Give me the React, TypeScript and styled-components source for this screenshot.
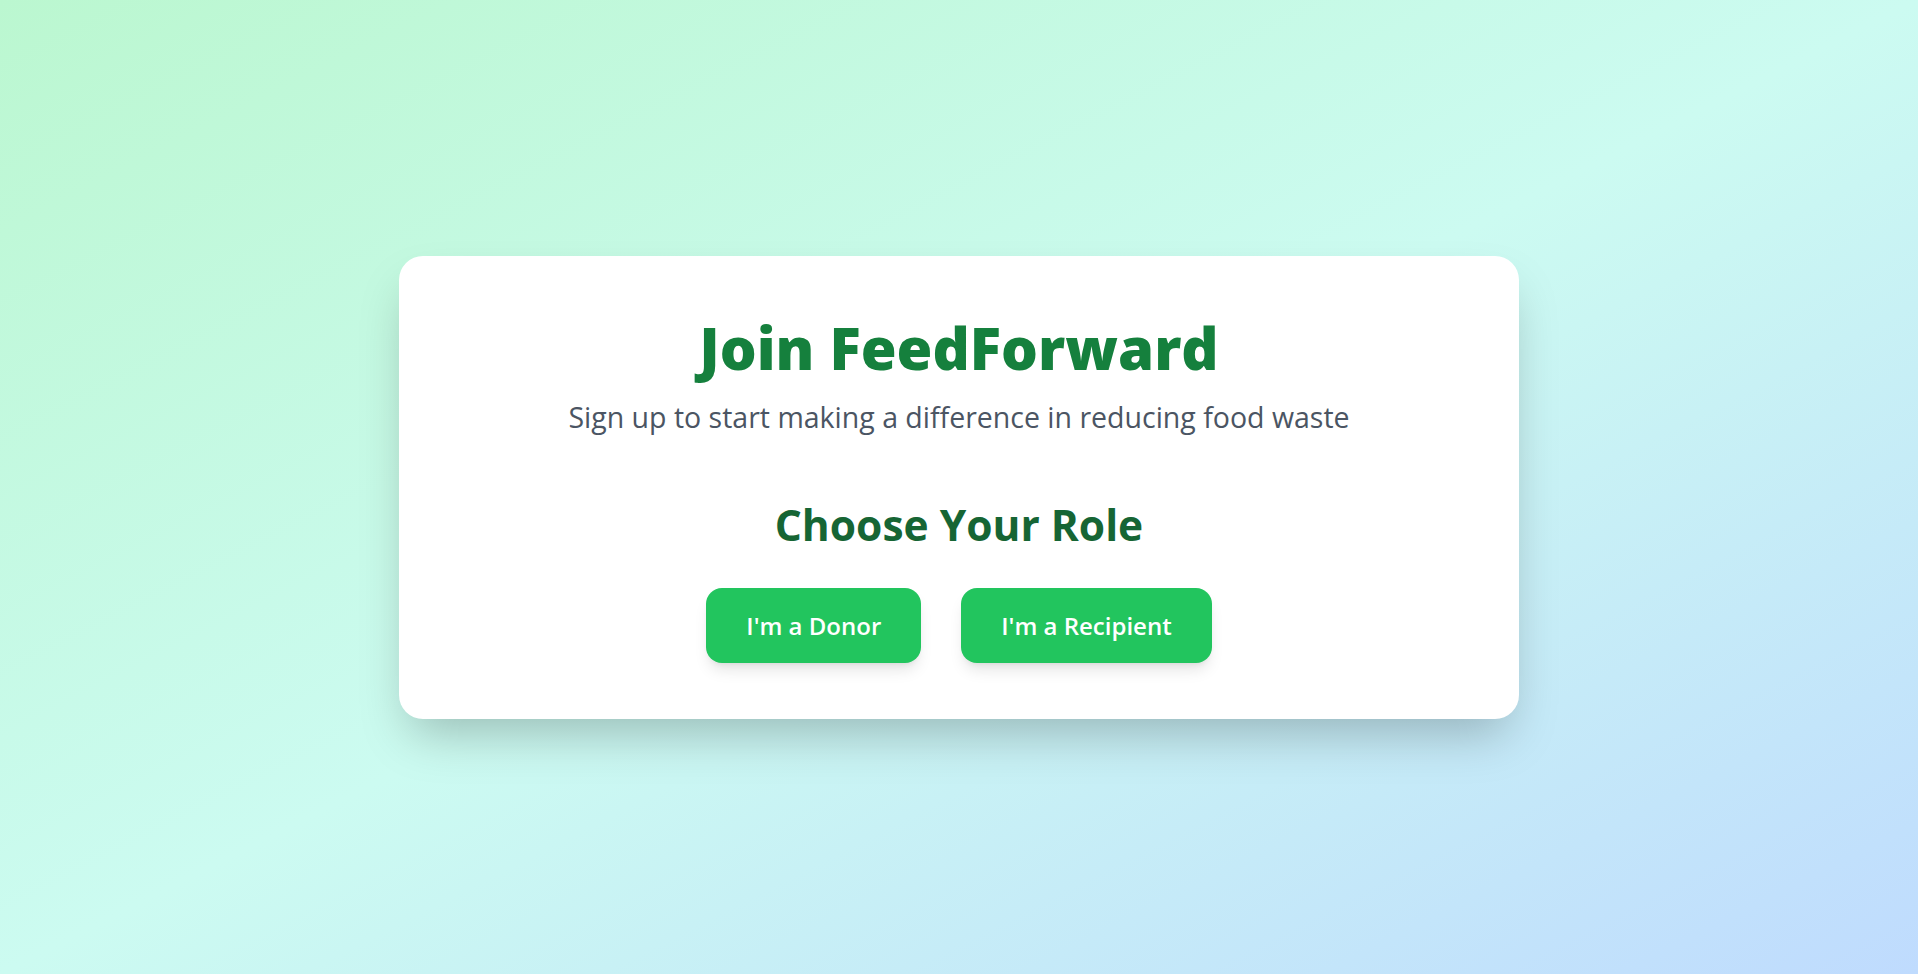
import React from "react";
import styled, { createGlobalStyle } from "styled-components";

const GlobalStyle = createGlobalStyle`
  html, body {
    margin: 0;
    padding: 0;
  }
  body {
    font-family: "Open Sans", "Noto Sans", sans-serif;
  }
  * {
    box-sizing: border-box;
  }
`;

function App() {
  return (
    <Page>
      <GlobalStyle />
      <Card>
        <Title>Join FeedForward</Title>
        <Subtitle>Sign up to start making a difference in reducing food waste</Subtitle>
        <RoleHeading>Choose Your Role</RoleHeading>
        <ButtonRow>
          <RoleButton type="button">I'm a Donor</RoleButton>
          <RoleButton type="button">I'm a Recipient</RoleButton>
        </ButtonRow>
      </Card>
    </Page>
  );
}

export default App;

const Page = styled.div`
  min-height: 100vh;
  width: 100%;
  display: flex;
  align-items: center;
  justify-content: center;
  background: linear-gradient(to bottom right, #bbf7d0 0%, #ccfbf1 50%, #bfdbfe 100%);
`;

const Card = styled.div`
  width: 1120px;
  background: #ffffff;
  border-radius: 24px;
  box-shadow: 0 25px 50px -12px rgba(0, 0, 0, 0.25);
  padding: 60px 40px 56px;
  display: flex;
  flex-direction: column;
  align-items: center;
  text-align: center;
`;

const Title = styled.h1`
  margin: 0;
  font-size: 58px;
  line-height: 64px;
  font-weight: 800;
  color: #15803d;
`;

const Subtitle = styled.p`
  margin: 17px 0 0;
  font-size: 28.5px;
  line-height: 40px;
  color: #4b5563;
`;

const RoleHeading = styled.h2`
  margin: 63px 0 0;
  font-size: 42.5px;
  line-height: 50px;
  font-weight: 700;
  color: #166534;
`;

const ButtonRow = styled.div`
  margin-top: 38px;
  display: flex;
  gap: 40px;
  justify-content: center;
`;

const RoleButton = styled.button`
  height: 75px;
  padding: 0 40px;
  border: none;
  border-radius: 16px;
  background: #22c55e;
  color: #ffffff;
  font-family: inherit;
  font-size: 24px;
  font-weight: 600;
  cursor: pointer;
  box-shadow: 0 10px 15px -3px rgba(0, 0, 0, 0.1), 0 4px 6px -4px rgba(0, 0, 0, 0.1);
`;
